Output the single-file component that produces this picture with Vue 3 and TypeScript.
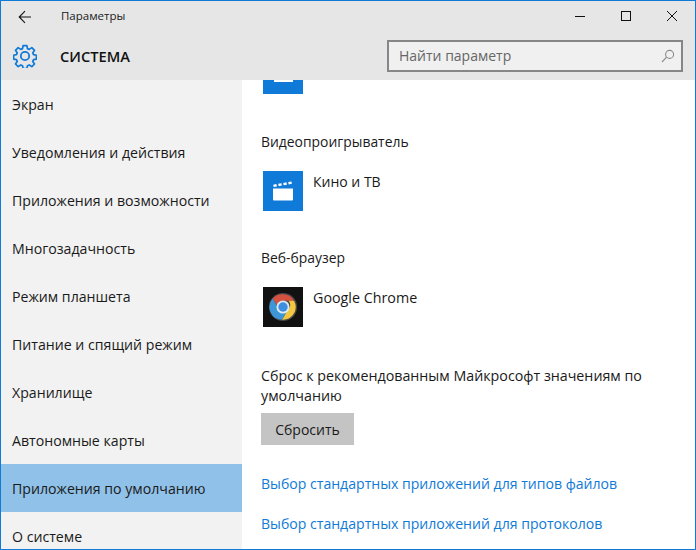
<script setup lang="ts">
const items: string[] = [
  'Экран',
  'Уведомления и действия',
  'Приложения и возможности',
  'Многозадачность',
  'Режим планшета',
  'Питание и спящий режим',
  'Хранилище',
  'Автономные карты',
  'Приложения по умолчанию',
  'О системе',
]
const activeItem = 'Приложения по умолчанию'
</script>

<template>
  <div class="window">
    <header class="chrome">
      <div class="titlebar">
        <svg class="back" width="14" height="14" viewBox="0 0 14 14" fill="none" stroke="#111" stroke-width="1.1">
          <path d="M13 7H1.2M7 1.2 1.2 7 7 12.8" />
        </svg>
        <span class="title">Параметры</span>
        <div class="controls">
          <svg width="12" height="12" viewBox="0 0 12 12" fill="none" stroke="#111"><path d="M1 6.5H11" /></svg>
          <svg width="12" height="12" viewBox="0 0 12 12" fill="none" stroke="#111"><rect x="1.5" y="1.5" width="9" height="9" /></svg>
          <svg width="12" height="12" viewBox="0 0 12 12" fill="none" stroke="#111"><path d="M1 1 11 11M11 1 1 11" /></svg>
        </div>
      </div>
      <div class="headbar">
        <svg class="gear" width="24" height="24" viewBox="0 0 24 24" fill="none" stroke="#0f7ad8" stroke-width="1.8" stroke-linejoin="round">
          <path d="M10 1h4l.6 3.2 1.9.8 2.7-1.8 2.8 2.8-1.8 2.7.8 1.9 3 .6v4l-3 .6-.8 1.9 1.8 2.7-2.8 2.8-2.7-1.8-1.9.8-.6 3h-4l-.6-3-1.9-.8-2.7 1.8-2.8-2.8 1.8-2.7-.8-1.9-3-.6v-4l3-.6.8-1.9-1.8-2.7 2.8-2.8 2.7 1.8 1.9-.8z" transform="translate(.6 .6) scale(.95)" />
          <circle cx="12" cy="12" r="4.2" />
        </svg>
        <span class="heading">СИСТЕМА</span>
        <div class="search">
          <span class="placeholder">Найти параметр</span>
          <svg width="14" height="14" viewBox="0 0 14 14" fill="none" stroke="#8a8a8a" stroke-width="1.1">
            <circle cx="8.6" cy="5.4" r="4" />
            <path d="M5.6 8.2 1 13" />
          </svg>
        </div>
      </div>
    </header>
    <div class="body">
      <nav class="sidebar">
        <div v-for="item in items" :key="item" class="nav-item" :class="{ active: item === activeItem }">{{ item }}</div>
      </nav>
      <main class="content">
        <div class="clipped">
          <div class="tile blue">
            <span class="partial"></span>
          </div>
        </div>
        <h2 class="label video">Видеопроигрыватель</h2>
        <div class="app">
          <div class="tile blue">
            <svg width="22" height="22" viewBox="0 0 22 22" fill="#fff">
              <path d="M1 8.5h20v11a1 1 0 0 1-1 1H2a1 1 0 0 1-1-1z" />
              <path d="M1.2 4.7 4.4 4.1l.5 2.4-3.2.6zM6.2 3.8l3.2-.6.5 2.4-3.2.6zM11.2 2.9l3.2-.6.5 2.4-3.2.6zM16.2 2l3.2-.6.5 2.4-3.2.6z" />
            </svg>
          </div>
          <span class="app-name">Кино и ТВ</span>
        </div>
        <h2 class="label browser">Веб-браузер</h2>
        <div class="app">
          <div class="tile dark">
            <svg width="30" height="30" viewBox="0 0 32 32">
              <circle cx="16" cy="16" r="15" fill="#4a4a4a" />
              <path d="M16 2.5A13.5 13.5 0 0 1 27.7 9.3H16A6.8 6.8 0 0 0 9.5 14L5 7A13.5 13.5 0 0 1 16 2.5z" fill="#d4503f" />
              <path d="M27.7 9.3A13.5 13.5 0 0 1 15 29.5l5.7-9.8a6.8 6.8 0 0 0 1.2-10.4z" fill="#f2c63e" />
              <path d="M5 7l5.8 10a6.8 6.8 0 0 0 9.6 3L15 29.5A13.5 13.5 0 0 1 5 7z" fill="#3c96d8" />
              <circle cx="16" cy="16" r="7" fill="#dfe9f2" />
              <circle cx="16" cy="16" r="5" fill="#3f8fe0" />
            </svg>
          </div>
          <span class="app-name chrome-name">Google Chrome</span>
        </div>
        <p class="reset-text">Сброс к рекомендованным Майкрософт значениям по умолчанию</p>
        <button class="reset" type="button">Сбросить</button>
        <a class="link first">Выбор стандартных приложений для типов файлов</a>
        <a class="link second">Выбор стандартных приложений для протоколов</a>
      </main>
    </div>
  </div>
</template>

<style>
html, body { margin: 0; background: #fff; }
</style>

<style scoped>
.window {
  width: 696px;
  height: 550px;
  box-sizing: border-box;
  border: 1px solid #0f7ad8;
  display: flex;
  flex-direction: column;
  overflow: hidden;
  font-family: "Open Sans", "Noto Sans", sans-serif;
  color: #1a1a1a;
  background: #fff;
}
.chrome { background: #e6e6e6; height: 79px; flex: none; }
.titlebar { height: 31px; display: flex; align-items: center; }
.back { margin-left: 17px; }
.title { margin-left: 29px; font-size: 11.5px; padding-bottom: 2px; }
.controls { margin-left: auto; margin-right: 17px; display: flex; gap: 34px; align-items: center; padding-bottom: 1px; }
.headbar { height: 48px; display: flex; align-items: center; }
.gear { margin-left: 12px; }
.heading { margin-left: 23px; font-size: 14.7px; font-weight: 600; color: #111; }
.search {
  margin-left: auto;
  margin-right: 12px;
  width: 296px;
  height: 32px;
  box-sizing: border-box;
  border: 2px solid #868686;
  background: #f0f0f0;
  display: flex;
  align-items: center;
  justify-content: space-between;
  padding: 0 6px 0 10px;
}
.placeholder { font-size: 14px; color: #666; padding-bottom: 2px; }
.body { flex: 1; display: flex; min-height: 0; }
.sidebar { width: 241px; flex: none; background: #f2f2f2; }
.nav-item {
  height: 48px;
  display: flex;
  align-items: center;
  padding-left: 11px;
  font-size: 14.15px;
  white-space: nowrap;
}
.active { background: #90c1e8; }
.content { flex: 1; padding-left: 19px; min-width: 0; }
.clipped { height: 14px; display: flex; align-items: flex-end; overflow: hidden; margin-left: 2px; }
.tile { width: 40px; height: 40px; flex: none; display: flex; align-items: center; justify-content: center; }
.clipped .tile { align-items: flex-start; justify-content: center; }
.partial { display: block; width: 19px; height: 2px; background: #fff; margin-top: 26px; }
.blue { background: #0f7ad8; }
.dark { background: #111; }
.label { margin: 0; font-size: 13.9px; font-weight: 400; line-height: 20px; }
.video { margin-top: 38px; }
.browser { margin-top: 37px; }
.app { display: flex; margin-top: 19px; margin-left: 2px; }
.app-name { margin-left: 10px; font-size: 14px; line-height: 20px; margin-top: 1px; }
.chrome-name { font-size: 14.3px; }
.reset-text { margin: 39px 16px 0 0; font-size: 14.25px; line-height: 20px; }
.reset {
  display: block;
  margin-top: 7px;
  width: 93px;
  height: 32px;
  border: 0;
  padding: 0;
  background: #c4c4c4;
  font: inherit;
  font-size: 14px;
  color: #1a1a1a;
}
.link { display: block; color: #0f7ad8; font-size: 14.08px; line-height: 20px; }
.first { margin-top: 29px; }
.second { margin-top: 20px; }
</style>
